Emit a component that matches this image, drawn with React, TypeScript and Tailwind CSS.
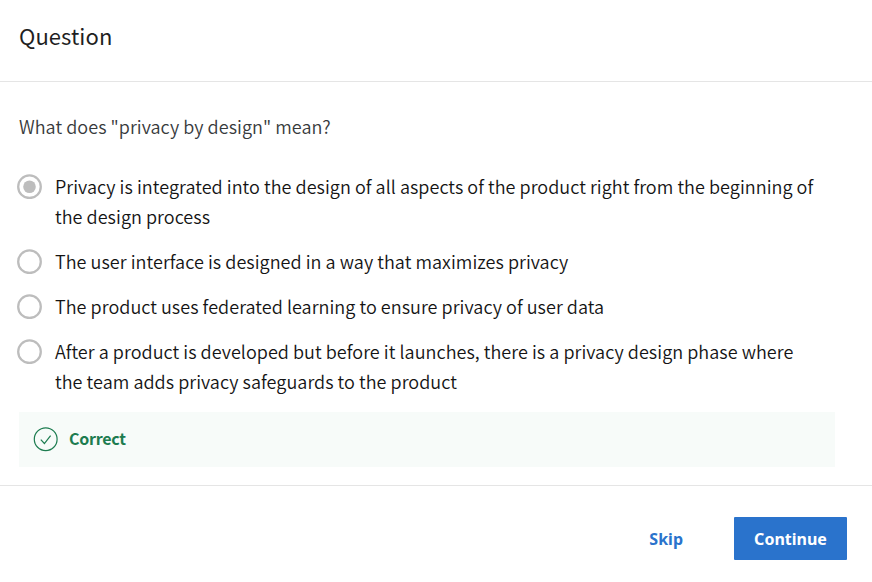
const options = [
  { lines: ["Privacy is integrated into the design of all aspects of the product right from the beginning of", "the design process"], selected: true },
  { lines: ["The user interface is designed in a way that maximizes privacy"], selected: false },
  { lines: ["The product uses federated learning to ensure privacy of user data"], selected: false },
  { lines: ["After a product is developed but before it launches, there is a privacy design phase where", "the team adds privacy safeguards to the product"], selected: false },
];

function Radio({ selected }: { selected: boolean }) {
  return (
    <svg className="mt-[3px] size-[25px] shrink-0" viewBox="0 0 25 25">
      <circle cx="12.5" cy="12.7" r="11.3" fill="none" stroke="#bdbdbd" strokeWidth="2.3" />
      {selected && <circle cx="12.5" cy="12.7" r="6.3" fill="#bdbdbd" />}
    </svg>
  );
}

export default function App() {
  return (
    <main className="flex h-[582px] w-[872px] flex-col overflow-hidden bg-white font-['Noto_Sans_CJK_SC',sans-serif] text-[#1f1f1f]">
      <header className="flex h-[82px] shrink-0 items-start border-b border-[#e5e5e5] pt-[17px] pl-[19px]">
        <h1 className="text-[22px] leading-9 tracking-[0.08px]">Question</h1>
      </header>
      <section className="h-[404px] shrink-0 border-b border-[#e5e5e5] pt-[29px] pr-[37px] pl-[19px]">
        <p className="text-[18px] leading-[30px] font-[350] tracking-[0.045px] text-[#373a3c]">What does "privacy by design" mean?</p>
        <div className="mt-[30px] flex flex-col gap-[15px]">
          {options.map((o) => (
            <label key={o.lines[0]} className="-ml-0.5 flex gap-[13px] text-[18px] leading-[30px] font-[350] tracking-[0.045px] text-[#141414]">
              <Radio selected={o.selected} />
              <span className="whitespace-nowrap">
                {o.lines.map((l) => <span className="block" key={l}>{l}</span>)}
              </span>
            </label>
          ))}
        </div>
        <div className="mt-4 flex h-[55px] items-center bg-[#f7fbf9] pl-[14px] text-[#1d7c50]">
          <svg width="25" height="25" viewBox="0 0 25 25" fill="none" stroke="currentColor" strokeWidth="1.2">
            <circle cx="12.7" cy="12.2" r="11.4" />
            <path d="m7.8 12.6 3.6 3.9 6.2-7.9" />
          </svg>
          <span className="ml-[11px] pb-[3px] text-base font-bold tracking-[-0.25px]">Correct</span>
        </div>
      </section>
      <footer className="flex h-24 items-start justify-end pt-[31px] pr-[25px] font-['Noto_Sans',sans-serif] font-bold">
        <button className="mr-[51px] h-[43px] text-base text-[#2a73cc]">Skip</button>
        <button className="h-[43px] w-[113px] rounded-[1px] bg-[#2a73cc] text-base text-white">Continue</button>
      </footer>
    </main>
  );
}
